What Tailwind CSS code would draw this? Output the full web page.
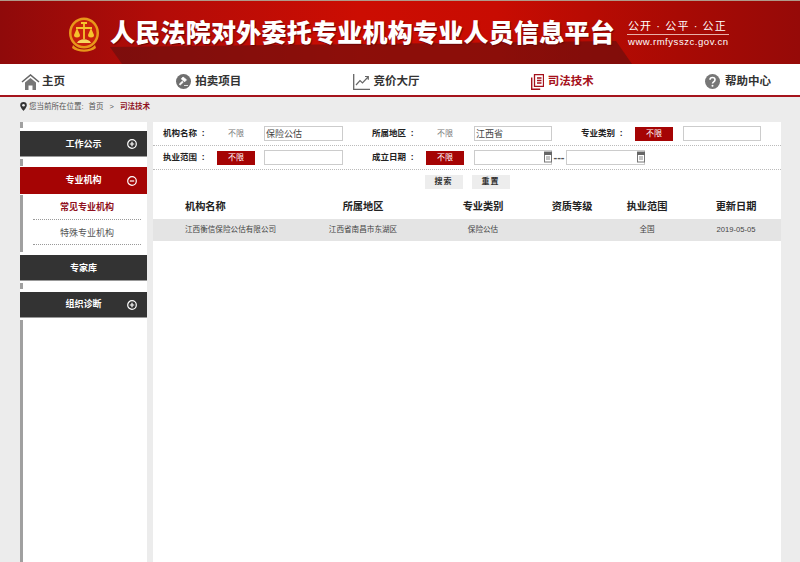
<!doctype html>
<html lang="zh-CN">
<head>
  <meta charset="UTF-8" />
  <meta name="viewport" content="width=device-width, initial-scale=1.0" />
  <title>人民法院对外委托专业机构专业人员信息平台</title>
  <script src="https://cdn.jsdelivr.net/npm/@tailwindcss/browser@4"></script>
</head>
<body class="bg-[#ececec] h-[562px] overflow-hidden text-[#333] font-['Liberation_Sans','Noto_Sans_CJK_SC',sans-serif]">

  <!-- Banner -->
  <header class="relative h-[64px] border-t border-[#b09a8a] bg-[linear-gradient(90deg,#8f0a0a_0%,#b30c08_20%,#cc0d02_45%,#c80c02_62%,#a80a04_85%,#960a08_100%)] flex items-center pl-[68px] overflow-hidden">
    <svg class="absolute left-0 top-0" width="800" height="64" viewBox="0 0 800 64">
      <polygon points="110,46 122,63 632,63 616,40" fill="#5a1010" opacity="0.55" />
    </svg>
    <svg class="relative shrink-0 mt-[2px]" width="32" height="36" viewBox="0 0 32 36">
      <ellipse cx="16" cy="17" rx="15" ry="15.5" fill="#e8971a" />
      <ellipse cx="16" cy="17" rx="12.5" ry="13" fill="#c8200c" />
      <path d="M16 6v17M8 12h16M13 7h6" stroke="#f6c32c" stroke-width="1.8" fill="none" />
      <path d="M6 19l3-7 3 7a3 2.500 0 0 1-6 0zM20 19l3-7 3 7a3 2.500 0 0 1-6 0z" fill="#f6c32c" />
      <path d="M9 27c2-5 12-5 14 0z" fill="#f6d860" />
      <path d="M5 29c5 6 17 6 22 0l1 3c-6 5-18 5-24 0z" fill="#e8971a" />
    </svg>
    <h1 class="relative ml-[10px] mt-[2px] text-[25px] tracking-[0.25px] leading-none font-black text-white whitespace-nowrap [text-shadow:1px_1px_1px_#6a0505]">人民法院对外委托专业机构专业人员信息平台</h1>
    <div class="relative ml-[12px] w-[102px] text-white">
      <div class="text-[11px] leading-[14px] whitespace-nowrap tracking-[1.1px] pl-[1px]">公开 · 公平 · 公正</div>
      <div class="border-t border-[#e8b0a8] mt-[1px] pt-[1px] text-[9.5px] leading-[11px] tracking-[0.55px] font-['Liberation_Sans'] pl-[1px] whitespace-nowrap">www.rmfysszc.gov.cn</div>
    </div>
  </header>

  <!-- Nav -->
  <nav class="h-[33px] pt-[4px] bg-white border-b-2 border-[#a5141c] flex items-center justify-between pl-[21px] pr-[29px] text-[11.5px] font-bold text-[#333]">
    <a class="flex items-center gap-[2px]">
      <svg width="19" height="16" viewBox="0 0 19 16"><path d="M1 8l8.500-7 8.500 7" fill="none" stroke="#666" stroke-width="1.600" /><path d="M4 8.500l5.500-4.500 5.500 4.500V16h-3.500v-4.500h-4V16H4z" fill="#777" /></svg>
      主页
    </a>
    <a class="flex items-center gap-[4px]">
      <svg width="15" height="15" viewBox="0 0 15 15"><circle cx="7.500" cy="7.500" r="7.500" fill="#6f6f6f" /><path d="M7 3l3.500 2.800-1.700 1.900L5.300 5zM6.300 7.200l-3 2.900.9 1 3-2.900zM8 11.500h4" stroke="#fff" stroke-width="0.800" fill="#fff" /></svg>
      拍卖项目
    </a>
    <a class="flex items-center gap-[4px]">
      <svg width="17" height="16" viewBox="0 0 17 16"><path d="M.7 0v15.300H17" fill="none" stroke="#666" stroke-width="1.300" /><path d="M3 11l4-4.500 2.500 2.500 5.500-6M12 2.500h3.300v3.300" fill="none" stroke="#666" stroke-width="1.200" /></svg>
      竞价大厅
    </a>
    <a class="flex items-center gap-[4px] text-[#a5101a]">
      <svg width="13" height="16" viewBox="0 0 13 16"><path d="M3.500.7h9v11.600h-9zM6 4h4.500M6 6.500h4.500M6 9h4.500" fill="none" stroke="#a5101a" stroke-width="1.300" /><path d="M.7 3.500v11.800h8.500" fill="none" stroke="#a5101a" stroke-width="1.400" /></svg>
      司法技术
    </a>
    <a class="flex items-center gap-[5px]">
      <svg width="15" height="15" viewBox="0 0 15 15"><circle cx="7.500" cy="7.500" r="7.500" fill="#777" /><path d="M5 5.800c0-3 5-3 5 0 0 2-2.500 2-2.500 3.700" fill="none" stroke="#fff" stroke-width="1.600" /><circle cx="7.500" cy="11.700" r="1" fill="#fff" /></svg>
      帮助中心
    </a>
  </nav>

  <!-- Breadcrumb -->
  <div class="h-[19px] flex items-center pl-[20px] text-[7.5px] text-[#555]">
    <svg width="7" height="9" viewBox="0 0 7 9" class="mr-[2px]"><path d="M3.500 0a3.300 3.300 0 0 1 3.300 3.300C6.800 5.500 3.500 9 3.500 9S.2 5.500.2 3.300A3.300 3.300 0 0 1 3.500 0z" fill="#333" /><circle cx="3.500" cy="3.300" r="1.300" fill="#ececec" /></svg>
    <span>您当前所在位置:</span>
    <span class="ml-[5px]">首页</span>
    <span class="ml-[6px]">&gt;</span>
    <span class="ml-[6px] text-[#8f1020] font-bold">司法技术</span>
  </div>

  <main class="flex items-stretch pl-[20px] pt-[6px] h-[452px]">
    <!-- Sidebar -->
    <aside class="w-[127px] bg-white flex flex-col text-[9px] shrink-0">
      <div class="h-[9px] flex"><i class="w-[3px] h-[6px] bg-[#a0a0a0]"></i></div>
      <div class="h-[26px] pt-[2px] bg-[#333] text-white font-bold flex items-center justify-center relative border-b border-[#999]">
        工作公示
        <svg class="absolute right-[10px] top-[8px]" width="10" height="10" viewBox="0 0 10 10"><circle cx="5" cy="5" r="4.300" fill="none" stroke="#fff" stroke-width="1.200" /><path d="M2.800 5h4.400M5 2.800v4.400" stroke="#fff" stroke-width="1.200" /></svg>
      </div>
      <div class="h-[10px] flex"><i class="w-[3px] h-[7px] mt-[2px] bg-[#a0a0a0]"></i></div>
      <div class="h-[27px] bg-[#a50404] text-white font-bold flex items-center justify-center relative">
        专业机构
        <svg class="absolute right-[10px] top-[9px]" width="10" height="10" viewBox="0 0 10 10"><circle cx="5" cy="5" r="4.300" fill="none" stroke="#fff" stroke-width="1.200" /><path d="M2.800 5h4.400" stroke="#fff" stroke-width="1.200" /></svg>
      </div>
      <div class="h-[57px] mt-[1px] mb-[3px] border-l-[3px] border-[#a0a0a0] pl-[10px] pr-[6px] text-center">
        <div class="h-[25px] leading-[24px] border-b border-dotted border-[#999] font-bold text-[#8f1020]">常见专业机构</div>
        <div class="h-[25px] leading-[26px] border-b border-dotted border-[#999] text-[#555]">特殊专业机构</div>
      </div>
      <div class="h-[26px] pt-[2px] bg-[#333] text-white font-bold flex items-center justify-center border-b border-[#999]">专家库</div>
      <div class="h-[11px] flex"><i class="w-[3px] h-[6px] mt-[2px] bg-[#a0a0a0]"></i></div>
      <div class="h-[26px] pt-[1px] bg-[#333] text-white font-bold flex items-center justify-center relative border-b border-[#999]">
        组织诊断
        <svg class="absolute right-[10px] top-[8px]" width="10" height="10" viewBox="0 0 10 10"><circle cx="5" cy="5" r="4.300" fill="none" stroke="#fff" stroke-width="1.200" /><path d="M2.800 5h4.400M5 2.800v4.400" stroke="#fff" stroke-width="1.200" /></svg>
      </div>
      <div class="flex-1 mt-[2px] w-[3px] bg-[#a0a0a0]"></div>
    </aside>

    <!-- Content -->
    <section class="ml-[6px] w-[628px] bg-white text-[9px]">
      <div class="h-[24px] pl-[10px] border-b border-dotted border-[#bbb] grid grid-cols-[54px_47px_108px_54px_48px_107px_54px_48px_78px] items-center">
        <b class="text-[#222] text-[8.5px]">机构名称&nbsp;&nbsp;:</b>
        <span class="w-[38px] text-center text-[#777] text-[8px]">不限</span>
        <input class="w-[79px] h-[15px] border border-[#ccc] pl-[1px] text-[9px] text-[#444]" value="保险公估" />
        <b class="text-[#222] text-[8.5px]">所属地区&nbsp;&nbsp;:</b>
        <span class="w-[38px] text-center text-[#777] text-[8px]">不限</span>
        <input class="w-[78px] h-[15px] border border-[#ccc] pl-[1px] text-[9px] text-[#444]" value="江西省" />
        <b class="text-[#222] text-[8.5px]">专业类别&nbsp;&nbsp;:</b>
        <span class="w-[38px] h-[14px] leading-[14px] bg-[#a50404] text-white text-center text-[8px]">不限</span>
        <input class="w-[78px] h-[15px] border border-[#ccc]" />
      </div>
      <div class="h-[24px] pl-[10px] border-b border-dotted border-[#bbb] grid grid-cols-[54px_47px_108px_54px_48px_auto] items-center">
        <b class="text-[#222] text-[8.5px]">执业范围&nbsp;&nbsp;:</b>
        <span class="w-[38px] h-[14px] leading-[14px] bg-[#a50404] text-white text-center text-[8px]">不限</span>
        <input class="w-[79px] h-[15px] border border-[#ccc]" />
        <b class="text-[#222] text-[8.5px]">成立日期&nbsp;&nbsp;:</b>
        <span class="w-[38px] h-[14px] leading-[14px] bg-[#a50404] text-white text-center text-[8px]">不限</span>
        <div class="flex items-center">
          <div class="w-[78px] h-[15px] border border-[#ccc] relative">
            <svg class="absolute right-[-1px] top-0" width="8" height="12" viewBox="0 0 8 12"><rect x="0.500" y="1" width="7" height="10" fill="#fff" stroke="#777" /><rect x="0" y="1" width="8" height="3" fill="#666" /><path d="M2 6h4M2 8h4" stroke="#888" /></svg>
          </div>
          <span class="w-[14px] text-center leading-none text-[#555] text-[11px] font-bold">---</span>
          <div class="w-[79px] h-[15px] border border-[#ccc] relative">
            <svg class="absolute right-[-1px] top-0" width="8" height="12" viewBox="0 0 8 12"><rect x="0.500" y="1" width="7" height="10" fill="#fff" stroke="#777" /><rect x="0" y="1" width="8" height="3" fill="#666" /><path d="M2 6h4M2 8h4" stroke="#888" /></svg>
          </div>
        </div>
      </div>
      <div class="flex justify-center gap-[9px] pt-[5px]">
        <button class="w-[38px] h-[14px] bg-[#ededed] text-[8px] leading-[14px] tracking-[1px] text-[#333] font-bold">搜索</button>
        <button class="w-[38px] h-[14px] bg-[#ededed] text-[8px] leading-[14px] tracking-[1px] text-[#333] font-bold">重置</button>
      </div>
      <div class="mt-[1px] h-[29px] pt-[5px] grid grid-cols-[150px_120px_120px_58px_92px_86px] items-center text-center text-[10.200px] font-bold text-[#222]">
        <div class="text-left pl-[32px]">机构名称</div>
        <div>所属地区</div>
        <div>专业类别</div>
        <div>资质等级</div>
        <div>执业范围</div>
        <div>更新日期</div>
      </div>
      <div class="h-[22px] bg-[#e4e4e4] grid grid-cols-[150px_120px_120px_58px_92px_86px] items-center text-center text-[7.600px] text-[#444]">
        <div class="text-left pl-[32px] whitespace-nowrap">江西衡信保险公估有限公司</div>
        <div>江西省南昌市东湖区</div>
        <div>保险公估</div>
        <div></div>
        <div>全国</div>
        <div>2019-05-05</div>
      </div>
    </section>
  </main>
</body>
</html>
